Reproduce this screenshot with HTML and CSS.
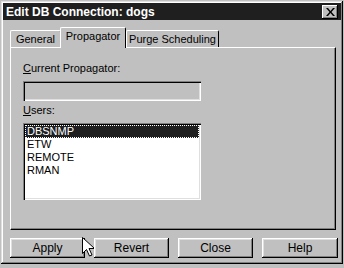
FILE: index.html
```html
<!DOCTYPE html>
<html lang="en">
<head>
  <meta charset="UTF-8" />
  <title>Edit DB Connection: dogs</title>
  <link rel="stylesheet" href="styles.css">
</head>
<body>
  <div class="window">
    <div class="titlebar">
      <span class="title">Edit DB Connection: dogs</span>
      <span class="close-btn">
        <svg width="9" height="8" viewBox="0 0 9 8"><path d="M0 0h2l2.5 3 2.5-3h2L5.5 4 9 8H7L4.5 5 2 8H0l3.5-4z" fill="#000"/></svg>
      </span>
    </div>

    <div class="tabs">
      <div class="tab tab-general">General</div>
      <div class="tab tab-prop active">Propagator</div>
      <div class="tab tab-purge">Purge Scheduling</div>
    </div>

    <div class="panel">
      <label class="label"><u>C</u>urrent Propagator:</label>
      <div class="field"></div>
      <label class="label users-label"><u>U</u>sers:</label>
      <div class="listbox">
        <div class="item selected">DBSNMP</div>
        <div class="item">ETW</div>
        <div class="item">REMOTE</div>
        <div class="item">RMAN</div>
      </div>
    </div>

    <div class="buttons">
      <div class="btn">Apply</div>
      <div class="btn">Revert</div>
      <div class="btn">Close</div>
      <div class="btn">Help</div>
    </div>

    <!-- mouse pointer over the buttons -->
    <svg class="cursor" width="12" height="20" viewBox="0 0 12 20">
      <path d="M0.5 0.5v16l4-4 3 6.5 2.5-1-3-6.5h5.5z" fill="#fff" stroke="#000" stroke-width="1"/>
    </svg>
  </div>
</body>
</html>
```

FILE: styles.css
```css
body {
  margin: 0;
  background: #c0c0c0;
  font-family: 'Liberation Sans', Arial, sans-serif;
  font-size: 11px;
  color: #000;
}

.window {
  position: relative;
  width: 342px;
  height: 263px;
  margin: 1px 0 0 1px;
  background: #c0c0c0;
  box-shadow: inset -1px -1px #000, inset 1px 1px #dfdfdf, inset -2px -2px #808080, inset 2px 2px #fff;
  padding: 2px;
  box-sizing: border-box;
}

.titlebar {
  height: 17px;
  background: #1f1f1f;
  display: flex;
  align-items: center;
  justify-content: space-between;
  padding: 0 3px;
}

.title {
  color: #fff;
  font-weight: bold;
  font-size: 12px;
}

.close-btn {
  width: 16px;
  height: 14px;
  background: #c0c0c0;
  box-shadow: inset -1px -1px #000, inset 1px 1px #fff, inset -2px -2px #808080;
  display: flex;
  align-items: center;
  justify-content: center;
}

.tabs {
  display: flex;
  align-items: flex-end;
  height: 24px;
  padding-left: 7px;
  margin-top: 3px;
}

.tab {
  height: 17px;
  line-height: 16px;
  text-align: center;
  border: 1px solid #fff;
  border-right: 1px solid #000;
  border-bottom: none;
  border-radius: 2px 2px 0 0;
  box-sizing: border-box;
}

.tab-general {
  width: 51px;
  margin-right: -1px;
}

.tab-prop {
  width: 66px;
}

.tab-purge {
  width: 93px;
}

.tab.active {
  height: 21px;
  line-height: 17px;
  position: relative;
  z-index: 1;
  margin-bottom: -1px;
  background: #c0c0c0;
}

.panel {
  margin-left: 7px;
  width: 326px;
  height: 183px;
  box-sizing: border-box;
  border-top: 1px solid #fff;
  border-left: 1px solid #fff;
  border-right: 1px solid #000;
  border-bottom: 1px solid #000;
  box-shadow: inset -1px -1px #808080;
  padding: 13px 0 0 12px;
}

.label {
  display: block;
  line-height: 15px;
}

.field {
  width: 178px;
  height: 20px;
  margin-top: 5px;
  background: #c0c0c0;
  box-sizing: border-box;
  box-shadow: inset 1px 1px #808080, inset 2px 2px #000, inset -1px -1px #fff, inset -2px -2px #dfdfdf;
}

.users-label {
  margin-top: 2px;
}

.listbox {
  width: 178px;
  height: 77px;
  margin-top: 5px;
  background: #fff;
  box-sizing: border-box;
  padding: 2px;
  box-shadow: inset 1px 1px #808080, inset 2px 2px #000, inset -1px -1px #fff, inset -2px -2px #dfdfdf;
}

.item {
  line-height: 13px;
  height: 13px;
  padding-left: 2px;
}

.item.selected {
  background: #1f1f1f;
  color: #fff;
  outline: 1px dotted #fff;
  outline-offset: -1px;
}

.buttons {
  display: flex;
  gap: 9px;
  margin: 8px 0 0 7px;
}

.btn {
  width: 75px;
  height: 20px;
  line-height: 20px;
  text-align: center;
  font-size: 12px;
  box-shadow: inset -1px -1px #000, inset 1px 1px #fff, inset -2px -2px #808080, inset 2px 2px #dfdfdf;
}

.btn:last-child {
  width: 76px;
}

.cursor {
  position: absolute;
  left: 81px;
  top: 236px;
}
```
